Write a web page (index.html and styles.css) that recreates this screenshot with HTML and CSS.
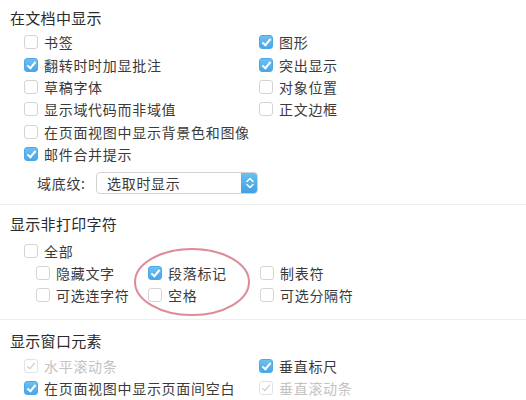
FILE: index.html
```html
<!DOCTYPE html>
<html lang="zh-CN">
<head>
<meta charset="utf-8">
<link rel="stylesheet" href="styles.css">
</head>
<body>
<div class="page">
  <section class="section s1">
    <div class="title">在文档中显示</div>
    <div class="grid2">
      <label class="item"><span class="cb"></span><span>书签</span></label>
      <label class="item"><span class="cb on"></span><span>图形</span></label>
      <label class="item"><span class="cb on"></span><span>翻转时时加显批注</span></label>
      <label class="item"><span class="cb on"></span><span>突出显示</span></label>
      <label class="item"><span class="cb"></span><span>草稿字体</span></label>
      <label class="item"><span class="cb"></span><span>对象位置</span></label>
      <label class="item"><span class="cb"></span><span>显示域代码而非域值</span></label>
      <label class="item"><span class="cb"></span><span>正文边框</span></label>
      <label class="item span2"><span class="cb"></span><span>在页面视图中显示背景色和图像</span></label>
      <label class="item span2"><span class="cb on"></span><span>邮件合并提示</span></label>
    </div>
    <div class="selrow">
      <span class="sellabel">域底纹:</span>
      <div class="select">
        <span class="seltext">选取时显示</span>
        <span class="stepper">
          <svg width="10" height="14" viewBox="0 0 10 14"><path d="M2 5.5 L5 2.5 L8 5.5" fill="none" stroke="#fff" stroke-width="1.5" stroke-linecap="round" stroke-linejoin="round"/><path d="M2 8.5 L5 11.5 L8 8.5" fill="none" stroke="#fff" stroke-width="1.5" stroke-linecap="round" stroke-linejoin="round"/></svg>
        </span>
      </div>
    </div>
  </section>
  <section class="section s2">
    <div class="title">显示非打印字符</div>
    <label class="item"><span class="cb"></span><span>全部</span></label>
    <div class="grid3">
      <label class="item"><span class="cb"></span><span>隐藏文字</span></label>
      <label class="item"><span class="cb on"></span><span>段落标记</span></label>
      <label class="item"><span class="cb"></span><span>制表符</span></label>
      <label class="item"><span class="cb"></span><span>可选连字符</span></label>
      <label class="item"><span class="cb"></span><span>空格</span></label>
      <label class="item"><span class="cb"></span><span>可选分隔符</span></label>
    </div>
    <svg class="ring" width="122" height="72" viewBox="0 0 122 72"><ellipse cx="61" cy="36" rx="57" ry="33" fill="none" stroke="#de8a98" stroke-width="2"/></svg>
  </section>
  <section class="section s3">
    <div class="title">显示窗口元素</div>
    <div class="grid2">
      <label class="item dis"><span class="cb dcheck"></span><span>水平滚动条</span></label>
      <label class="item"><span class="cb on"></span><span>垂直标尺</span></label>
      <label class="item"><span class="cb on"></span><span>在页面视图中显示页面间空白</span></label>
      <label class="item dis"><span class="cb dcheck"></span><span>垂直滚动条</span></label>
    </div>
  </section>
</div>
</body>
</html>
```
FILE: styles.css
```css
html, body {
  margin: 0;
  padding: 0;
  background: #fff;
}
body {
  font-family: "Noto Sans CJK SC", "Noto Sans", sans-serif;
  color: #3a3a3a;
  font-size: 14px;
  letter-spacing: 0.7px;
  width: 526px;
  height: 400px;
  overflow: hidden;
}
.section {
  position: relative;
  padding: 7px 0 10px 0;
  border-bottom: 1px solid #eeeeee;
}
.s2 { padding: 8px 0 12px 0; }
.s3 { padding: 10px 0 0 0; border-bottom: none; }
.title {
  height: 22px;
  line-height: 22px;
  font-size: 15px;
  color: #2a2a2a;
  padding-left: 10px;
  margin-bottom: 2px;
  letter-spacing: 0.3px;
}
.s2 .title { margin-bottom: 4px; }
.s3 .title { margin-bottom: 3px; }
.grid2 {
  display: grid;
  grid-template-columns: 235px auto;
  padding-left: 24px;
}
.span2 { grid-column: 1 / 3; }
.grid3 {
  display: grid;
  grid-template-columns: 112px 112px auto;
  padding-left: 36px;
}
.item {
  display: flex;
  align-items: center;
  height: 22.4px;
  white-space: nowrap;
}
.s2 > .item { padding-left: 24px; }
.cb {
  flex: none;
  width: 12px;
  height: 12px;
  border: 1px solid #d4d4d4;
  border-radius: 3px;
  background: #fff;
  margin-right: 6px;
  box-sizing: content-box;
  position: relative;
}
.cb.on {
  background: linear-gradient(#6cc1f1, #4aa6e6);
  border-color: #4ea8e6;
}
.cb.on::after, .cb.dcheck::after {
  content: "";
  position: absolute;
  left: 4px;
  top: 1px;
  width: 3px;
  height: 7px;
  border-right: 2px solid #fff;
  border-bottom: 2px solid #fff;
  transform: rotate(40deg);
}
.cb.dcheck { border-color: #e2e2e2; }
.cb.dcheck::after {
  border-right: 1.5px solid #c4c4c4;
  border-bottom: 1.5px solid #c4c4c4;
}
.dis { color: #c2c2c2; }
.selrow {
  display: flex;
  align-items: center;
  margin-top: 7px;
  padding-left: 37px;
  height: 22px;
}
.sellabel {
  width: 59px;
  flex: none;
}
.select {
  display: flex;
  align-items: center;
  width: 162px;
  height: 22px;
  box-sizing: border-box;
  border: 1px solid #d2d2d2;
  border-radius: 4px;
  background: #fff;
  overflow: hidden;
}
.seltext {
  flex: 1;
  padding-left: 10px;
}
.stepper {
  width: 17px;
  height: 22px;
  margin: -1px -1px -1px 0;
  background: linear-gradient(#6cc1f1, #3f9fe3);
  border-radius: 0 4px 4px 0;
  display: flex;
  align-items: center;
  justify-content: center;
}
.ring {
  position: absolute;
  left: 131px;
  top: 41px;
}
```
